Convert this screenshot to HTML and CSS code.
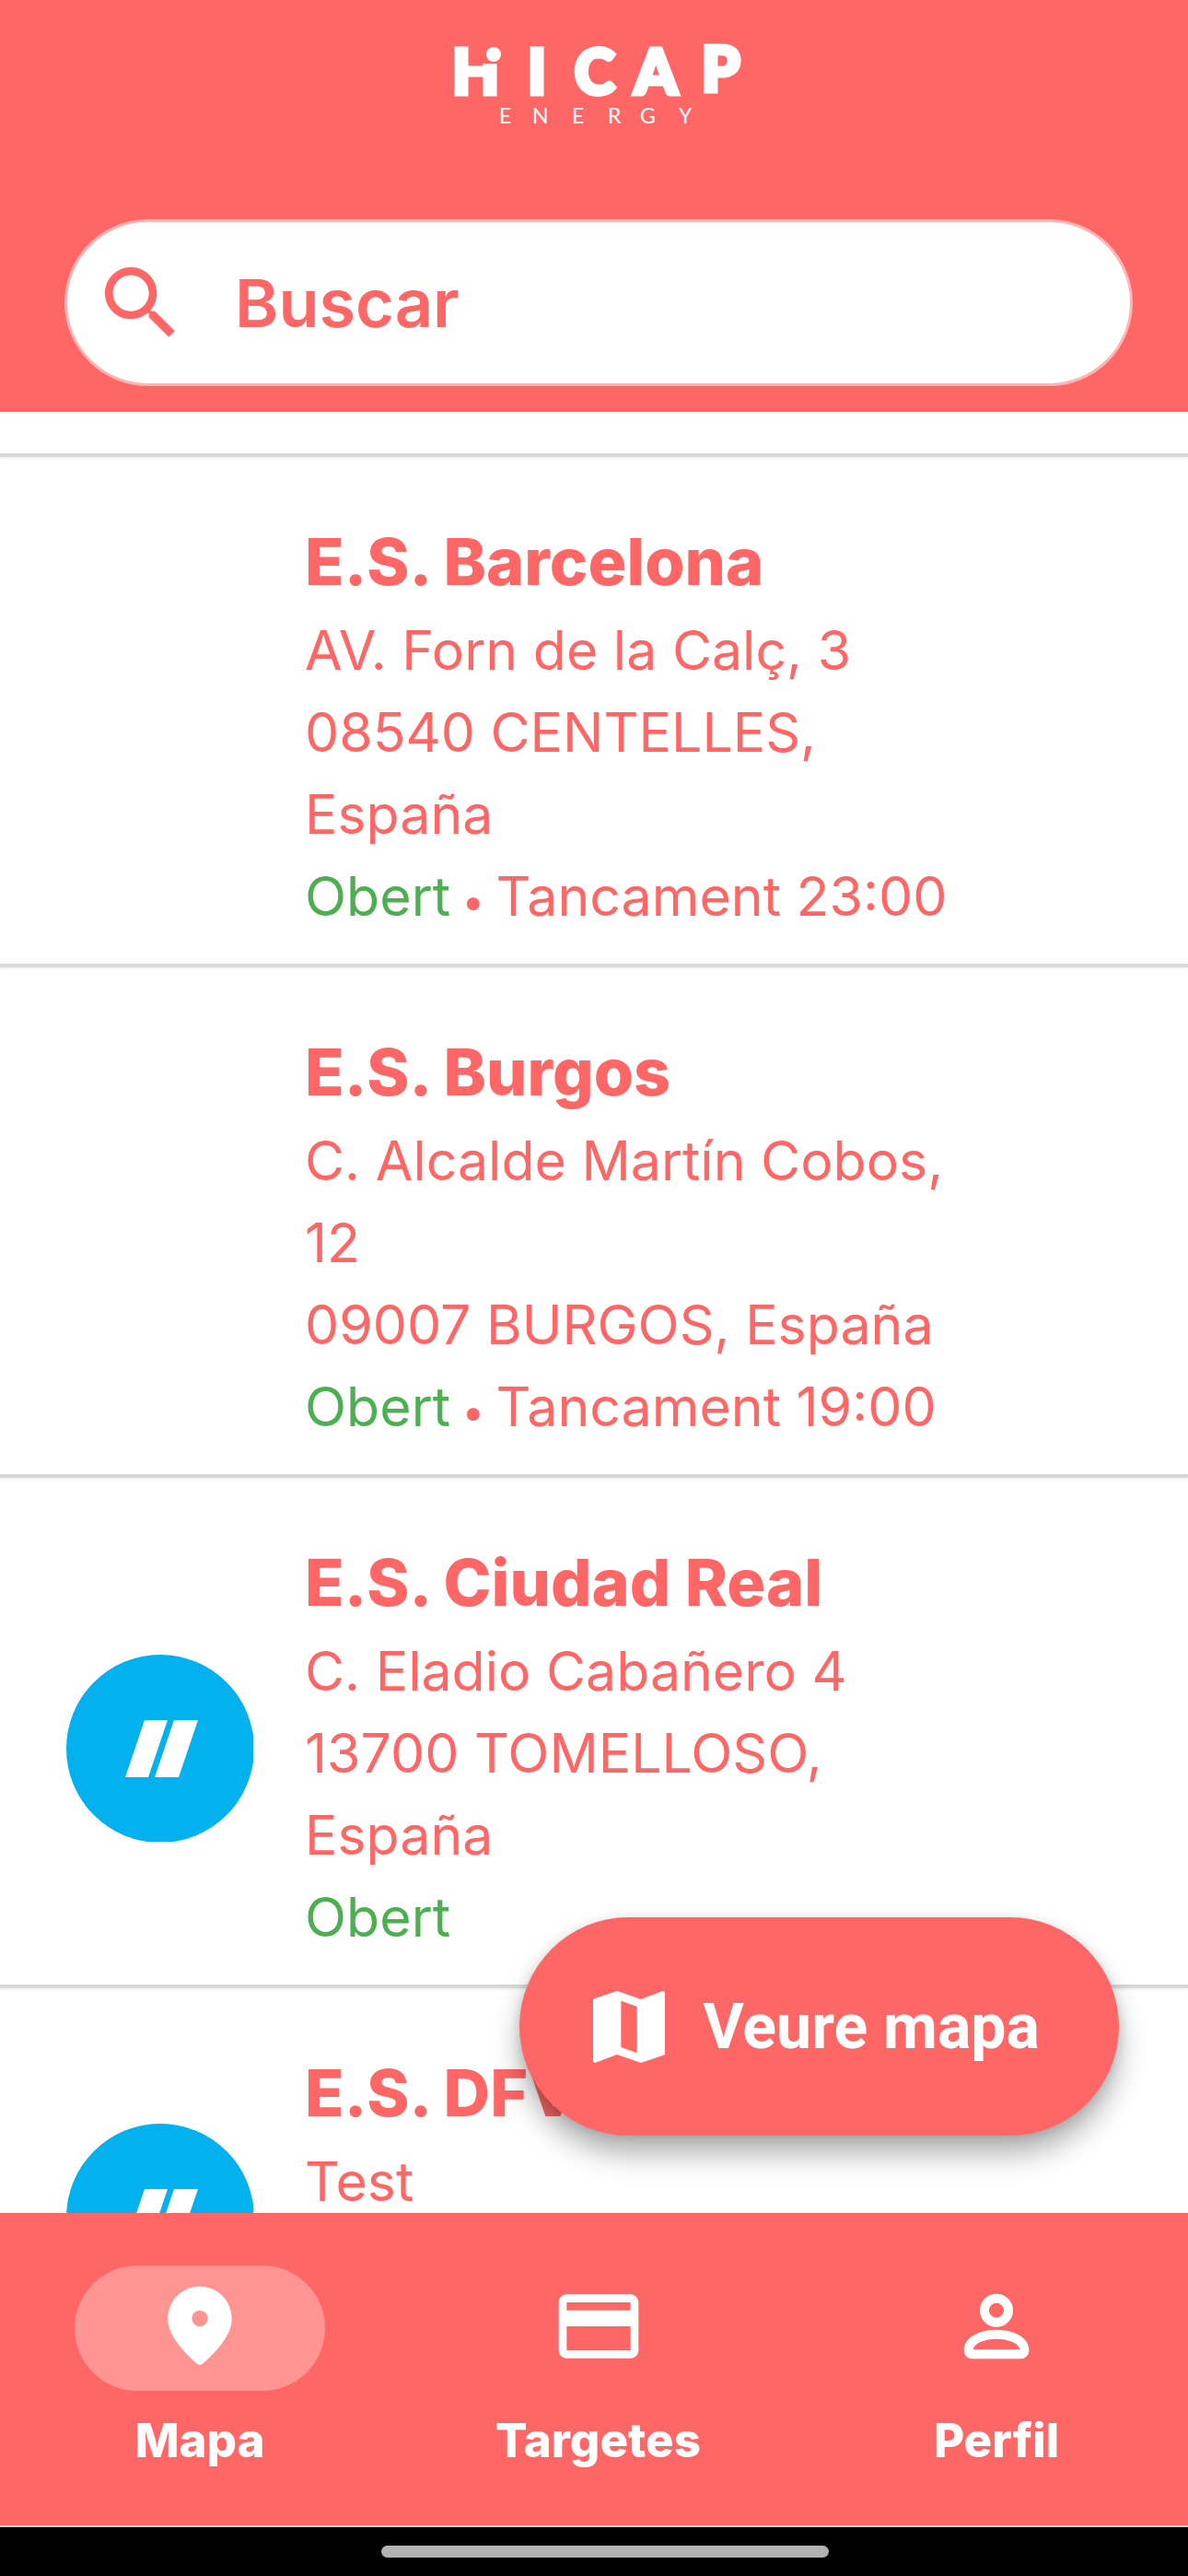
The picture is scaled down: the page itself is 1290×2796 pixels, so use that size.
FILE: index.html
```html
<!DOCTYPE html>
<html lang="ca">
<head>
    <meta charset="UTF-8">
    <meta name="viewport" content="width=device-width, initial-scale=1.0">
    <title>HICAP Energy</title>
    <link rel="stylesheet" href="styles.css">
</head>
<body>
    <header class="header">
        <svg class="logo" viewBox="0 -20 320 120" role="img" aria-label="HICAP Energy">
            <text class="logo-name" x="1 83 134 199 272" y="56 56 56 56 53">HICAP</text>
            <!-- the right stem of the H is cut and topped with a dot -->
            <rect class="logo-cut" x="25" y="0" width="34" height="23"/>
            <circle class="logo-dot" cx="46" cy="13" r="8"/>
            <text class="logo-sub" x="52 88 131 170 205 247" y="88">ENERGY</text>
        </svg>
        <div class="search">
            <label for="search" aria-label="Buscar">
                <svg class="icon" viewBox="0 0 24 24">
                    <path d="M15.5 14h-.79l-.28-.27C15.41 12.59 16 11.11 16 9.5 16 5.91 13.09 3 9.5 3S3 5.91 3 9.5 5.91 16 9.5 16c1.61 0 3.09-.59 4.23-1.57l.27.28v.79l5 4.99L20.49 19l-4.99-5zm-6 0C7.01 14 5 11.99 5 9.5S7.01 5 9.5 5 14 7.01 14 9.5 11.99 14 9.5 14z"/>
                </svg>
            </label>
            <input type="text" id="search" placeholder="Buscar">
        </div>
    </header>

    <main class="main">
        <ul class="stations">
            <li class="station station-previous"></li>
            <li class="station">
                <div class="station-logo"></div>
                <div class="station-info">
                    <h2>E.S. Barcelona</h2>
                    <p>AV. Forn de la Calç, 3</p>
                    <p>08540 CENTELLES, España</p>
                    <p><span class="open">Obert</span><span class="dot"> • </span>Tancament 23:00</p>
                </div>
            </li>
            <li class="station">
                <div class="station-logo"></div>
                <div class="station-info">
                    <h2>E.S. Burgos</h2>
                    <p>C. Alcalde Martín Cobos, 12</p>
                    <p>09007 BURGOS, España</p>
                    <p><span class="open">Obert</span><span class="dot"> • </span>Tancament 19:00</p>
                </div>
            </li>
            <li class="station">
                <svg class="station-logo" viewBox="0 0 203 203">
                    <circle cx="102" cy="102" r="102" fill="#03b1ee"/>
                    <path d="M85 71h25L89 133H64zM117 71h26l-21 62H96z" fill="#fff"/>
                </svg>
                <div class="station-info">
                    <h2>E.S. Ciudad Real</h2>
                    <p>C. Eladio Cabañero 4</p>
                    <p>13700 TOMELLOSO, España</p>
                    <p><span class="open">Obert</span></p>
                </div>
            </li>
            <li class="station">
                <svg class="station-logo" viewBox="0 0 203 203">
                    <circle cx="102" cy="102" r="102" fill="#03b1ee"/>
                    <path d="M85 71h25L89 133H64zM117 71h26l-21 62H96z" fill="#fff"/>
                </svg>
                <div class="station-info">
                    <h2>E.S. DFV</h2>
                    <p>Test</p>
                    <p>Test, España</p>
                    <p><span class="open">Obert</span></p>
                </div>
            </li>
        </ul>
        <button class="map-button" type="button">
            <svg class="icon" viewBox="0 0 24 24">
                <path d="M20.5 3l-.16.03L15 5.1 9 3 3.36 4.9c-.21.07-.36.25-.36.48V20.5c0 .28.22.5.5.5l.16-.03L9 18.9l6 2.1 5.64-1.9c.21-.07.36-.25.36-.48V3.5c0-.28-.22-.5-.5-.5zM14 18.5l-4-1.4V5.5l4 1.4v11.6z"/>
            </svg>
            Veure mapa
        </button>
    </main>

    <nav class="nav">
        <a class="nav-item active" href="#mapa">
            <span class="nav-icon">
                <svg class="icon" viewBox="0 0 24 24">
                    <path fill-rule="evenodd" d="M12 2c-4.2 0-8 3.22-8 8.2 0 3.18 2.45 6.92 7.34 11.23.38.33.95.33 1.33 0C17.55 17.12 20 13.38 20 10.2 20 5.22 16.2 2 12 2zm0 10a2 2 0 1 1 0-4 2 2 0 0 1 0 4z"/>
                </svg>
            </span>
            Mapa
        </a>
        <a class="nav-item" href="#targetes">
            <span class="nav-icon">
                <svg class="icon" viewBox="0 0 24 24">
                    <path d="M20 4H4c-1.11 0-1.99.89-1.99 2L2 18c0 1.11.89 2 2 2h16c1.11 0 2-.89 2-2V6c0-1.11-.89-2-2-2zm0 14H4v-6h16v6zm0-10H4V6h16v2z"/>
                </svg>
            </span>
            Targetes
        </a>
        <a class="nav-item" href="#perfil">
            <span class="nav-icon">
                <svg class="icon icon-line" viewBox="0 0 24 24">
                    <circle cx="12" cy="8" r="3"/>
                    <path d="M6 19h12c.6 0 1-.4 1-1 0-2.6-3.6-4-7-4s-7 1.4-7 4c0 .6.4 1 1 1z"/>
                </svg>
            </span>
            Perfil
        </a>
    </nav>
    <div class="system-bar"><div class="handle"></div></div>
</body>
</html>
```
FILE: styles.css
```css
* {
    box-sizing: border-box;
}

body {
    margin: 0;
    height: 100vh;
    display: flex;
    flex-direction: column;
    background-color: #fff;
    color: #ff6766;
    font-family: Inter, Roboto, sans-serif;
}

.icon {
    display: block;
    width: 104px;
    height: 104px;
    fill: currentColor;
}

.icon-line {
    fill: none;
    stroke: currentColor;
    stroke-width: 2.3;
}

/* header */
.header {
    display: flex;
    flex-direction: column;
    align-items: center;
    padding: 26px 60px 28px 70px;
    background-color: #ff6766;
}

.logo {
    width: 320px;
    height: 120px;
    margin-bottom: 92px;
    overflow: visible;
}

.logo-name {
    fill: #fff;
    stroke: #fff;
    stroke-width: 5px;
    font: 900 66px Lato, sans-serif;
}

.logo-sub {
    fill: #fff;
    font: 400 23px Lato, sans-serif;
}

.logo-cut {
    fill: #ff6766;
}

.logo-dot {
    fill: #fff;
}

.search {
    display: flex;
    align-items: center;
    gap: 50px;
    width: 100%;
    height: 181px;
    padding: 0 60px 0 28px;
    border: 3px solid #ffb3b2;
    border-radius: 91px;
    background-color: #fff;
}

.search input {
    flex: 1;
    min-width: 0;
    padding: 0;
    border: none;
    outline: none;
    background: none;
    color: #ff6766;
    font: 600 72px Inter, sans-serif;
}

.search input::placeholder {
    color: #ff6766;
    opacity: 1;
}

/* station list */
.main {
    position: relative;
    flex: 1;
    min-height: 0;
}

.stations {
    height: 100%;
    margin: 0;
    padding: 0;
    list-style: none;
    overflow: hidden;
}

.station {
    display: flex;
    align-items: center;
    gap: 56px;
    padding: 65px 240px 29px 72px;
    border-bottom: 4px solid #d8d8d8;
    box-shadow: 0 2px 2px #f2f2f2;
}

.station-previous {
    height: 49px;
    padding: 0;
}

.station-logo {
    flex: none;
    width: 203px;
    height: 203px;
}

.station-info {
    flex: 1;
}

.station h2 {
    margin: 0 0 2px;
    font-size: 70px;
    font-weight: 800;
    line-height: 98px;
}

.station p {
    margin: 0;
    font-size: 59px;
    line-height: 89px;
}

.open {
    color: #4caf50;
}

.station .dot {
    font-size: 44px;
    line-height: 1;
}

.map-button {
    position: absolute;
    right: 75px;
    bottom: 84px;
    display: flex;
    align-items: center;
    gap: 28px;
    height: 237px;
    padding: 0 86px 0 67px;
    border: none;
    border-radius: 119px;
    background-color: #ff6766;
    box-shadow: 0 20px 30px rgba(0, 0, 0, 0.3), 0 2px 12px rgba(0, 0, 0, 0.12);
    color: #fff;
    font: 700 68px Roboto, sans-serif;
}

/* bottom navigation */
.nav {
    display: flex;
    justify-content: space-between;
    padding: 57px 72px 60px 81px;
    border-bottom: 2px solid #f3d5d5;
    background-color: #ff6766;
}

.nav-item {
    display: flex;
    flex-direction: column;
    align-items: center;
    gap: 22px;
    color: #fff;
    font-size: 51px;
    font-weight: 800;
    line-height: 64px;
    text-decoration: none;
}

.nav-icon {
    display: flex;
    align-items: center;
    justify-content: center;
    width: 272px;
    height: 136px;
    padding-bottom: 4px;
    border-radius: 68px;
}

.active .nav-icon {
    background-color: #ff9593;
}

.system-bar {
    display: flex;
    justify-content: center;
    padding: 20px 0 20px 24px;
    height: 53px;
    background-color: #000;
}

.handle {
    width: 486px;
    max-width: 40%;
    height: 13px;
    border-radius: 7px;
    background-color: #b3b3b3;
}
```
